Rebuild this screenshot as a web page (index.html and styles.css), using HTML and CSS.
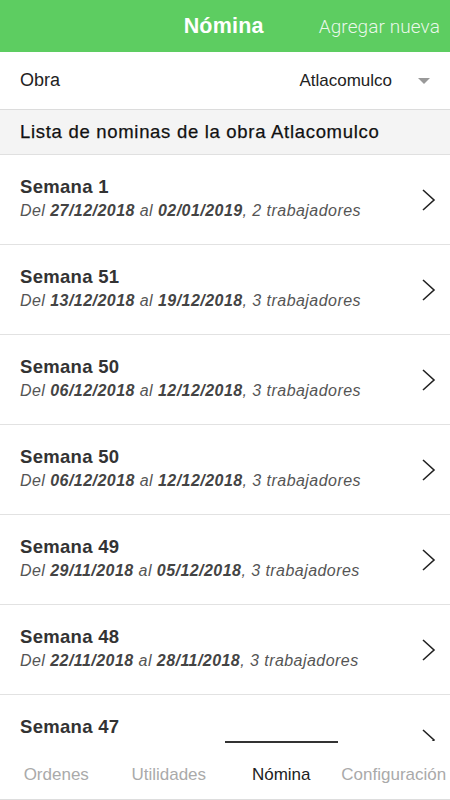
FILE: index.html
```html
<!DOCTYPE html>
<html lang="es">
<head>
    <meta charset="UTF-8">
    <meta name="viewport" content="width=device-width, initial-scale=1.0">
    <title>Nómina</title>
    <link rel="stylesheet" href="styles.css">
</head>
<body>
    <!-- Barra superior -->
    <div class="topbar">
        <div class="topbar-title">Nómina</div>
        <div class="topbar-action">Agregar nueva</div>
    </div>

    <!-- Selector de obra -->
    <div class="obra-row">
        <span class="obra-label">Obra</span>
        <span class="obra-select">Atlacomulco <span class="caret"></span></span>
    </div>

    <div class="section-title">Lista de nominas de la obra Atlacomulco</div>

    <div class="list">
        <div class="item">
            <div class="item-text">
                <div class="item-title">Semana 1</div>
                <div class="item-sub">Del <b>27/12/2018</b> al <b>02/01/2019</b>, 2 trabajadores</div>
            </div>
            <svg class="chev" width="16" height="24" viewBox="0 0 16 24"><path d="M2 2 L13 12 L2 22" fill="none" stroke="#222" stroke-width="1.6"/></svg>
        </div>
        <div class="item">
            <div class="item-text">
                <div class="item-title">Semana 51</div>
                <div class="item-sub">Del <b>13/12/2018</b> al <b>19/12/2018</b>, 3 trabajadores</div>
            </div>
            <svg class="chev" width="16" height="24" viewBox="0 0 16 24"><path d="M2 2 L13 12 L2 22" fill="none" stroke="#222" stroke-width="1.6"/></svg>
        </div>
        <div class="item">
            <div class="item-text">
                <div class="item-title">Semana 50</div>
                <div class="item-sub">Del <b>06/12/2018</b> al <b>12/12/2018</b>, 3 trabajadores</div>
            </div>
            <svg class="chev" width="16" height="24" viewBox="0 0 16 24"><path d="M2 2 L13 12 L2 22" fill="none" stroke="#222" stroke-width="1.6"/></svg>
        </div>
        <div class="item">
            <div class="item-text">
                <div class="item-title">Semana 50</div>
                <div class="item-sub">Del <b>06/12/2018</b> al <b>12/12/2018</b>, 3 trabajadores</div>
            </div>
            <svg class="chev" width="16" height="24" viewBox="0 0 16 24"><path d="M2 2 L13 12 L2 22" fill="none" stroke="#222" stroke-width="1.6"/></svg>
        </div>
        <div class="item">
            <div class="item-text">
                <div class="item-title">Semana 49</div>
                <div class="item-sub">Del <b>29/11/2018</b> al <b>05/12/2018</b>, 3 trabajadores</div>
            </div>
            <svg class="chev" width="16" height="24" viewBox="0 0 16 24"><path d="M2 2 L13 12 L2 22" fill="none" stroke="#222" stroke-width="1.6"/></svg>
        </div>
        <div class="item">
            <div class="item-text">
                <div class="item-title">Semana 48</div>
                <div class="item-sub">Del <b>22/11/2018</b> al <b>28/11/2018</b>, 3 trabajadores</div>
            </div>
            <svg class="chev" width="16" height="24" viewBox="0 0 16 24"><path d="M2 2 L13 12 L2 22" fill="none" stroke="#222" stroke-width="1.6"/></svg>
        </div>
        <div class="item">
            <div class="item-text">
                <div class="item-title">Semana 47</div>
                <div class="item-sub">Del <b>15/11/2018</b> al <b>21/11/2018</b>, 3 trabajadores</div>
            </div>
            <svg class="chev" width="16" height="24" viewBox="0 0 16 24"><path d="M2 2 L13 12 L2 22" fill="none" stroke="#222" stroke-width="1.6"/></svg>
        </div>
    </div>

    <!-- Pestañas inferiores -->
    <div class="tabs">
        <div class="tab">Ordenes</div>
        <div class="tab">Utilidades</div>
        <div class="tab active">Nómina</div>
        <div class="tab">Configuración</div>
    </div>
</body>
</html>
```

FILE: styles.css
```css
/* Estilos de la pantalla de nómina */
body { margin: 0; height: 800px; display: flex; flex-direction: column; font-family: "Liberation Sans", Arial, sans-serif; color: #222; background: #fff; overflow: hidden; }

.topbar { height: 52px; flex-shrink: 0; background: #5dcd61; display: flex; align-items: center; justify-content: flex-end; padding-right: 10px; }
.topbar-title { color: #fff; font-weight: bold; font-size: 21.5px; margin-right: 55px; letter-spacing: 0.2px; }
.topbar-action { color: rgba(255,255,255,0.88); font-family: Roboto, sans-serif; font-weight: 300; font-size: 19px; letter-spacing: 0.1px; }

.obra-row { height: 57px; flex-shrink: 0; display: flex; align-items: center; justify-content: space-between; padding: 0 20px; border-bottom: 1px solid #dcdcdc; }
.obra-label { font-size: 18px; color: #222; }
.obra-select { font-size: 17px; color: #222; display: flex; align-items: center; }
.caret { width: 0; height: 0; border-left: 6px solid transparent; border-right: 6px solid transparent; border-top: 6px solid #999; margin-left: 26px; }

.section-title { height: 44px; flex-shrink: 0; background: #f4f4f4; display: flex; align-items: center; padding: 0 20px; font-size: 18.5px; letter-spacing: 0.7px; color: #111; -webkit-text-stroke: 0.25px #111; border-bottom: 1px solid #e0e0e0; }

.list { flex: 1; overflow: hidden; }
.item { height: 89px; display: flex; align-items: center; justify-content: space-between; padding: 0 13px 0 20px; border-bottom: 1px solid #e2e2e2; }
.item-text { margin-top: -2px; }
.item-title { font-size: 18.5px; font-weight: bold; color: #333; line-height: 22px; letter-spacing: 0.3px; }
.item-sub { font-size: 16px; font-style: italic; color: #555; line-height: 20px; margin-top: 3px; letter-spacing: 0.45px; }
.item-sub b { color: #444; }

.tabs { height: 58px; flex-shrink: 0; display: flex; background: #fff; border-bottom: 1px solid #ddd; }
.tab { flex: 1; text-align: center; font-size: 17px; color: #aaa; padding-top: 22px; border-top: 2px solid transparent; white-space: nowrap; }
.tab.active { color: #222; border-top-color: #333; }
```
